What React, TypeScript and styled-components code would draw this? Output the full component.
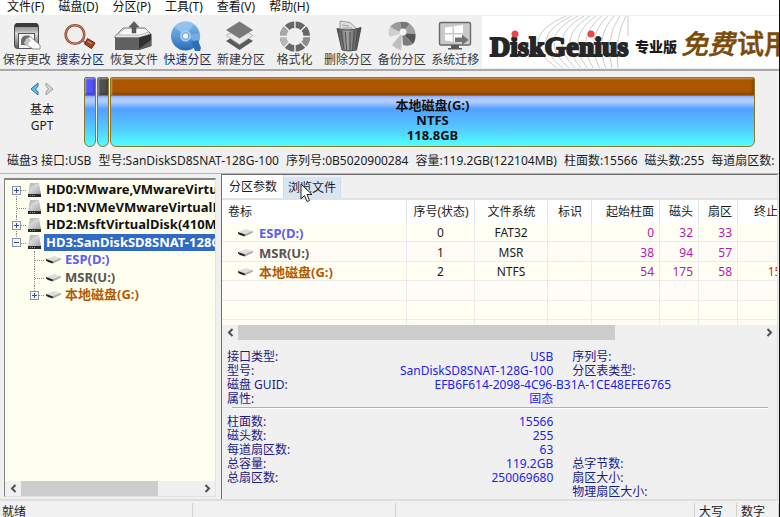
import React from 'react';
import styled, { createGlobalStyle, css } from 'styled-components';

const Global = createGlobalStyle`
  * { box-sizing: border-box; }
  html, body { margin: 0; padding: 0; }
  body, button {
    font-family: "Noto Sans", "Open Sans", "Noto Sans CJK SC", sans-serif;
    font-size: 12px;
    line-height: 14px;
    color: #1c1c1c;
  }
  button { margin: 0; padding: 0; border: 0; background: none; white-space: nowrap; }
  svg { display: block; flex: none; }
`;

const Window = styled.div`
  display: flex;
  flex-direction: column;
  height: 100vh;
  overflow: hidden;
  background: #f0f0f0;
  border-right: 1px solid #111;
`;

/* ---------- menu and toolbar ---------- */
const MenuBar = styled.nav`
  display: flex;
  flex: none;
  gap: 14px;
  height: 15px;
  padding-left: 7px;
  background: #fff;
`;
const MenuItem = styled.button`
  height: 13px;
  line-height: 13px;
  color: #111;
`;
const ToolRow = styled.header`
  display: flex;
  flex: none;
  height: 56px;
  border-bottom: 2px solid #a9a9a9;
`;
const Tools = styled.div`
  display: grid;
  grid-template-columns: repeat(9, 1fr);
  flex: none;
  width: 482px;
  padding-top: 5px;
`;
const Tool = styled.button<{ $accent?: boolean }>`
  display: flex;
  flex-direction: column;
  align-items: center;
  gap: 1px;
  color: ${(p) => (p.$accent ? '#1b2a5c' : '#383838')};
`;
const Banner = styled.div`
  flex: 1;
  min-width: 0;
  margin: 1px 0;
  background: #fff;
  overflow: hidden;
`;

/* ---------- disk map ---------- */
const DiskMap = styled.section`
  display: flex;
  flex: none;
  height: 78px;
  padding: 6px 24px 0 0;
`;
const DiskNav = styled.div`
  display: flex;
  flex-direction: column;
  align-items: center;
  flex: none;
  width: 84px;
  line-height: 16px;
`;
const Arrows = styled.div`
  display: flex;
  gap: 4px;
  padding: 5px 0 6px;
`;
const Parts = styled.div`
  display: flex;
  flex: 1;
  gap: 1px;
  min-width: 0;
`;
const Part = styled.div<{ $color: string; $wide?: boolean }>`
  flex: ${(p) => (p.$wide ? '1' : '0 0 12px')};
  height: 70px;
  border: 1px solid #8c7a2a;
  border-radius: 2px 2px 6px 6px;
  overflow: hidden;
  text-align: center;
  font-size: 13px;
  font-weight: 700;
  line-height: 15px;
  color: #111;
  background: linear-gradient(#7ba0ff 17px, #b5cdff 21px, #b0caff 24px, #52a0ff 31px, #54c8ff 50px, #50ffff 68px);
  &::before {
    content: '';
    display: block;
    height: 17px;
    margin-bottom: 2px;
    background: ${(p) => p.$color};
    border-bottom: 1px solid #8c7a2a;
    box-shadow: inset 1px 1px 2px rgba(255, 255, 255, 0.4), inset -2px -2px 2px rgba(0, 0, 0, 0.2);
  }
`;
const InfoLine = styled.div`
  display: flex;
  flex: none;
  gap: 7px;
  height: 24px;
  padding: 5px 0 0 7px;
  white-space: nowrap;
  overflow: hidden;
`;

/* ---------- body ---------- */
const Body = styled.main`
  display: flex;
  flex: 1;
  min-height: 0;
  border-top: 1px solid #b4b4b4;
`;
const Side = styled.aside`
  display: flex;
  flex-direction: column;
  flex: none;
  width: 212px;
  margin: 4px 5px 2px 4px;
  border: 1px solid #e2e2e2;
  border-top: 2px solid #858585;
  border-left: 1px solid #858585;
  background: #fffff0;
`;
const Tree = styled.ul`
  flex: 1;
  min-height: 0;
  margin: 0;
  padding: 1px 0 0;
  list-style: none;
  overflow: hidden;
`;
const TreeRow = styled.li<{ $child?: boolean }>`
  display: flex;
  align-items: center;
  height: 18px;
  padding-left: ${(p) => (p.$child ? '18px' : '0')};
  font-size: 13px;
  font-weight: 700;
  white-space: nowrap;
  &:nth-child(even) { height: 17px; }
`;
const Guide = styled.span<{ $up?: boolean; $down?: boolean }>`
  position: relative;
  display: flex;
  align-items: center;
  justify-content: center;
  align-self: stretch;
  flex: none;
  width: 22px;
  &::before {
    content: '';
    position: absolute;
    left: 11px;
    top: ${(p) => (p.$up ? '0' : '50%')};
    bottom: ${(p) => (p.$down ? '0' : '50%')};
    border-left: 1px dotted #8a8a8a;
  }
  &::after {
    content: '';
    position: absolute;
    left: 12px;
    right: 1px;
    top: 50%;
    border-top: 1px dotted #8a8a8a;
  }
`;
const Toggle = styled.button`
  position: relative;
  z-index: 1;
  width: 9px;
  height: 9px;
  background: #f4f6fa;
  outline: 1px solid #8c96a8;
  outline-offset: -1px;
`;
const TreeLabel = styled.span<{ $color?: string; $selected?: boolean }>`
  align-self: stretch;
  flex: 1;
  padding-left: 2px;
  margin-left: 2px;
  line-height: 17px;
  overflow: hidden;
  color: ${(p) => (p.$selected ? '#fff' : p.$color || '#111')};
  ${(p) => p.$selected && css`background: #316ac5;`}
`;

const ScrollTrack = styled.div`
  display: flex;
  flex: none;
  height: 15px;
  background: #f0f0f0;
`;
const ScrollButton = styled.button`
  display: flex;
  align-items: center;
  justify-content: center;
  flex: none;
  width: 16px;
`;
const ScrollRun = styled.div`
  flex: 1;
`;
const ScrollThumb = styled.div<{ $size: string }>`
  width: ${(p) => p.$size};
  height: 100%;
  background: #cdcdcd;
`;

const Content = styled.section`
  display: flex;
  flex-direction: column;
  flex: 1;
  min-width: 0;
  margin: 0 1px 0 0;
  border-top: 1px solid #6e6e6e;
  border-left: 1px solid #6e6e6e;
  border-right: 1px solid #dcdcdc;
`;
const Tabs = styled.div`
  display: flex;
  align-items: flex-end;
  flex: none;
  height: 25px;
  border-bottom: 2px solid #e2e2e2;
`;
const Tab = styled.button<{ $active?: boolean }>`
  position: relative;
  height: ${(p) => (p.$active ? '23px' : '21px')};
  padding: ${(p) => (p.$active ? '0 6px 0 7px' : '0 4px')};
  background: ${(p) => (p.$active ? '#fff' : '#d8e6f4')};
  border-right: 1px solid #cbdcec;
`;
const Pointer = styled.svg`
  position: absolute;
  left: 16px;
  top: 6px;
`;
const TableClip = styled.div`
  flex: none;
  height: 125px;
  overflow: hidden;
  background: #fffff2;
`;
const Table = styled.table`
  width: 586px;
  table-layout: fixed;
  border-collapse: separate;
  border-spacing: 0;
  thead tr { height: 23px; }
  tbody tr { height: 19px; }
  tbody tr:nth-child(even) { height: 20px; background: #fffcf6; }
`;
const Col = styled.col<{ $w: number }>`
  width: ${(p) => p.$w}px;
`;
type Align = 'left' | 'center' | 'right';
const Th = styled.th<{ $align: Align }>`
  padding: 0 5px 0 6px;
  font-weight: 400;
  text-align: ${(p) => p.$align};
  white-space: nowrap;
  background: #fff;
  border-right: 1px solid #e4e4e4;
`;
const Td = styled.td<{ $align: Align; $color?: string }>`
  height: inherit;
  padding: 2px 5px 0;
  text-align: ${(p) => p.$align};
  color: ${(p) => p.$color || '#1c1c1c'};
  border-right: 1px solid #ebebef;
  border-bottom: 1px solid #ebebef;
`;
const Volume = styled.span<{ $color: string }>`
  display: flex;
  align-items: center;
  gap: 6px;
  padding-left: 10px;
  font-size: 13px;
  font-weight: 700;
  color: ${(p) => p.$color};
`;

const Details = styled.div`
  flex: 1;
  min-height: 0;
  padding: 10px 9px 0 5px;
`;
const Group = styled.dl`
  margin: 0;
`;
const Rule = styled.hr`
  height: 2px;
  margin: 1px 0 6px 5px;
  border: 0;
  border-top: 1px solid #b0b0b0;
  border-bottom: 1px solid #fff;
`;
const DetailRow = styled.div`
  display: grid;
  grid-template-columns: 5fr 3fr;
  column-gap: 19px;
  height: 14px;
  white-space: nowrap;
`;
const Pair = styled.div<{ $span?: boolean }>`
  display: flex;
  justify-content: space-between;
  ${(p) => p.$span && css`
    grid-column: 1 / 3;
    padding-right: 97px;
  `}
`;
const Term = styled.dt`
  color: #1b1b84;
`;
const Value = styled.dd`
  margin: 0;
  color: #2222f0;
`;

const StatusBar = styled.footer`
  display: flex;
  flex: none;
  height: 18px;
  border-top: 2px solid #dedede;
  background: #f1f1f1;
`;
const StatusCell = styled.div<{ $w?: number }>`
  flex: ${(p) => (p.$w ? `0 0 ${p.$w}px` : '1')};
  margin-top: 2px;
  padding: 2px 0 0 2px;
  border-right: 1px solid #d2d2d2;
  white-space: nowrap;
`;
const StatusKey = styled(StatusCell)`
  padding-left: 4px;
`;

/* ---------- icons ---------- */
const Gradients = () => (
  <svg width="0" height="0" aria-hidden="true">
    <defs>
      <linearGradient id="metal" x1="0" y1="0" x2="0" y2="1">
        <stop offset="0" stopColor="#3c3c3c" />
        <stop offset="0.12" stopColor="#7a7a7a" />
        <stop offset="0.4" stopColor="#d8d8d8" />
        <stop offset="1" stopColor="#5c5c5c" />
      </linearGradient>
      <linearGradient id="blue" x1="0" y1="0" x2="0" y2="1">
        <stop offset="0" stopColor="#7fb6e8" />
        <stop offset="0.5" stopColor="#5a9ada" />
        <stop offset="1" stopColor="#256bb4" />
      </linearGradient>
      <linearGradient id="bin" x1="0" y1="0" x2="1" y2="0">
        <stop offset="0" stopColor="#4a4a4a" />
        <stop offset="0.4" stopColor="#a5a5a5" />
        <stop offset="1" stopColor="#4a4a4a" />
      </linearGradient>
      <linearGradient id="drive" x1="0" y1="0" x2="1" y2="1">
        <stop offset="0" stopColor="#b2b2b2" />
        <stop offset="0.5" stopColor="#d0d0d0" />
        <stop offset="1" stopColor="#a2a2a2" />
      </linearGradient>
    </defs>
  </svg>
);
const Icon = ({ children }: { children: React.ReactNode }) => (
  <svg width="40" height="32" viewBox="0 0 40 32" aria-hidden="true">{children}</svg>
);
const SaveIcon = () => (
  <Icon>
    <rect x="7.5" y="3.5" width="24" height="25" rx="3" fill="url(#metal)" stroke="#4a4a4a" />
    <path d="M8 7V5.500Q8 3 11 3H28Q31 3 31 5.500V7Z" fill="#3a3a3a" />
    <path d="M9.500 7.500H29.500V10H9.500Z" fill="#a8a8a8" />
    <rect x="11.500" y="13.500" width="16" height="15" fill="#f4f4f4" stroke="#555" />
    <path d="M14 20Q15 15.500 19 15.500H23L20 25H14Z" fill="#6c6c6c" />
    <path d="M19 19L23 16.500L33 25V29H26L17 23Z" fill="#fff" stroke="#777" strokeWidth="0.800" />
    <path d="M17 23L21 17.500L24 20L20 26Z" fill="#c4c4c4" />
  </Icon>
);
const SearchIcon = () => (
  <Icon>
    <circle cx="15" cy="14.500" r="9.300" fill="#efefef" stroke="#8f4a32" strokeWidth="2.600" />
    <circle cx="15" cy="14.500" r="9.300" fill="none" stroke="#d3805c" strokeWidth="1" />
    <path d="M21.500 20L25.500 22.500" stroke="#777" strokeWidth="2" />
    <path d="M27.500 18.500L35 23L31.500 28.500L24.500 24Z" fill="#a8401f" stroke="#5f2412" />
    <path d="M27.500 21L32 24" stroke="#d9805f" strokeWidth="1.500" />
  </Icon>
);
const RecoverIcon = () => (
  <Icon>
    <path d="M1 16.500L9 8H31L37 14L25 18H1Z" fill="#e6e6e6" stroke="#555" strokeWidth="0.800" />
    <path d="M5 13L11 8.500H31L35 12L25 15H5Z" fill="#fafafa" stroke="#999" strokeWidth="0.600" />
    <path d="M1 17.500H25V30H1Z" fill="#606060" />
    <path d="M25 17.500L37.500 14V26L25 30Z" fill="#303030" />
    <path d="M25 29L37 20V26L25 30Z" fill="#5f5f5f" />
    <path d="M20 1.500L25 7H22V13H18V7H15Z" fill="#5d5d5d" stroke="#444" strokeWidth="0.500" />
  </Icon>
);
const DiscIcon = () => (
  <Icon>
    <circle cx="18.500" cy="16" r="14.500" fill="url(#blue)" />
    <path d="M18.500 16L7 7A14.500 14.500 0 0 1 27 4Z" fill="#9fcaf0" opacity="0.700" />
    <path d="M18.500 16L33 13A14.500 14.500 0 0 1 31 23Z" fill="#7db3e6" opacity="0.800" />
    <path d="M24 22L31 20L34 28L33 31H28Z" fill="#2d6fb4" />
    <circle cx="18.500" cy="16" r="5.500" fill="#a9cdf0" />
    <circle cx="18.500" cy="16" r="3.300" fill="#f4f8fc" stroke="#5d98d4" />
  </Icon>
);
const LayersIcon = () => (
  <Icon>
    <path d="M5 21L18.500 13L32 21L18.500 30Z" fill="#5b5b5b" />
    <path d="M5 15.500L18.500 8L32 15.500L18.500 24.500Z" fill="#e9e9e9" stroke="#ababab" strokeWidth="0.800" />
    <path d="M5 10L18.500 1.500L32 10L18.500 18.500Z" fill="#797979" />
  </Icon>
);
const FormatIcon = () => (
  <Icon>
    <circle cx="20" cy="16.500" r="11.800" fill="none" stroke="#686868" strokeWidth="6.500" />
    <path d="M8.200 16.500A11.800 11.800 0 0 1 11.700 8.200" fill="none" stroke="#a8a8a8" strokeWidth="6.500" />
    <path d="M11.700 24.800A11.800 11.800 0 0 1 8.200 16.500" fill="none" stroke="#b8b8b8" strokeWidth="6.500" />
    <path d="M28.300 24.800A11.800 11.800 0 0 0 31.800 16.500" fill="none" stroke="#8d8d8d" strokeWidth="6.500" />
    <path d="M20 0V33M3 16.500H37M8 4.500L32 28.500M32 4.500L8 28.500" stroke="#f0f0f0" strokeWidth="1.400" />
    <circle cx="20" cy="16.500" r="8.500" fill="#f0f0f0" />
  </Icon>
);
const TrashIcon = () => (
  <Icon>
    <path d="M12 1L22 2.500L30 10H12Z" fill="#e0e0e0" stroke="#858585" strokeWidth="0.800" />
    <path d="M14 5L21 6M14 8H24" stroke="#9a9a9a" />
    <path d="M9 8.500Q21 12 33 7.500L28.500 30Q21 32 14 30Z" fill="url(#bin)" stroke="#4a4a4a" />
    <path d="M13 11L16 29M17.500 12L18.500 30M22 12V30M26.500 11L24.500 30M30 10L27 29" stroke="#444" strokeWidth="0.900" />
  </Icon>
);
const BackupIcon = () => (
  <Icon>
    <path d="M20 13L9 16A12 12 0 0 1 10 5Z" fill="#b6b6b6" />
    <path d="M20 13L8 7Q13 1.500 18 2Z" fill="#9a9a9a" />
    <path d="M20 13L18 2Q25 1 28 4Z" fill="#777" />
    <path d="M20 13L28 4Q33 8 33.500 14Z" fill="#a0a0a0" />
    <path d="M20 13L33.500 14Q34 20 31 24Z" fill="#555" />
    <path d="M20 13L31 24Q26 27 21 25Z" fill="#7c7c7c" />
    <path d="M20 13L19 30Q14 29 10 25Z" fill="#bdbdbd" stroke="#d6d6d6" />
    <path d="M20 13L8 7Q5 12 8 17Z" fill="#cfcfcf" />
    <circle cx="21" cy="12" r="3.500" fill="#f2f2f2" />
  </Icon>
);
const MigrateIcon = () => (
  <Icon>
    <rect x="4.500" y="2.500" width="31" height="22.500" rx="1.500" fill="#c9c9c9" stroke="#6a6a6a" strokeWidth="1.400" />
    <path d="M16 25H24V28H27V29.500H13V28H16Z" fill="#5a5a5a" />
    <path d="M10 7.500L17.500 6.500V13H10ZM19 6.200L28 5V13H19ZM10 14.500H17.500V21.500L10 20.500ZM19 14.500H28V22.500L19 21.500Z" fill="#fff" />
    <path d="M20 17.500H27V14.500L33.500 20L27 25V22H20Z" fill="#727272" />
  </Icon>
);
const DiskIcon = () => (
  <svg width="15" height="15" viewBox="0 0 15 15" aria-hidden="true">
    <path d="M3 0H12L14 11H1Z" fill="url(#drive)" />
    <path d="M3 8Q5 3 11 1.500" stroke="#e2e2e2" fill="none" />
    <rect x="1" y="11" width="13" height="3" fill="#2a2a2a" />
    <path d="M3 12.500H8" stroke="#999" strokeDasharray="1 1" />
  </svg>
);
const VolumeIcon = () => (
  <svg width="16" height="10" viewBox="0 0 16 10" aria-hidden="true">
    <path d="M1 4L9 1L16 3L8 6.500Z" fill="#dedede" />
    <path d="M7 6.500L16 3V4.500L8 8.500Z" fill="#a8a8a8" />
    <path d="M1 4L7.500 6.300L8 8.500L3 7L1 5.500Z" fill="#222" />
  </svg>
);
const Chevron = ({ right }: { right?: boolean }) => (
  <svg width="7" height="9" viewBox="0 0 7 9" aria-hidden="true">
    <path d={right ? 'M1.500 1L5 4.500L1.500 8' : 'M5.500 1L2 4.500L5.500 8'} fill="none" stroke="#505050" strokeWidth="2" />
  </svg>
);
const PlusMinus = ({ plus }: { plus: boolean }) => (
  <svg width="9" height="9" viewBox="0 0 9 9" aria-hidden="true">
    <path d={plus ? 'M2 4.500H7M4.500 2V7' : 'M2 4.500H7'} stroke="#2f4f9c" />
  </svg>
);

const Scroll = ({ size }: { size: string }) => (
  <ScrollTrack>
    <ScrollButton aria-label="向左滚动"><Chevron /></ScrollButton>
    <ScrollRun><ScrollThumb $size={size} /></ScrollRun>
    <ScrollButton aria-label="向右滚动"><Chevron right /></ScrollButton>
  </ScrollTrack>
);

const LogoBanner = () => (
  <svg width="297" height="53" viewBox="0 0 297 53">
    <g fill="none" stroke="#cccccc" strokeWidth="1">
      {[0, 1, 2, 3, 4, 5, 6, 7, 8, 9, 10].map((i) => (
        <path key={i} d={`M${84 + i * 6} 0Q${32 + i * 10} 22 ${76 + i * 6} 53`} />
      ))}
      <path d="M146 0V20" />
    </g>
    <text x="8" y="40" fontFamily="Liberation Serif, serif" fontWeight="700" fontSize="28" fill="#262626" stroke="#262626" strokeWidth="2">DiskGenius</text>
    <circle cx="33" cy="18" r="3.500" fill="#e8484c" />
    <circle cx="109" cy="18" r="3.500" fill="#e8484c" />
    <text x="153" y="36" fontFamily="Noto Sans CJK SC, sans-serif" fontWeight="900" fontSize="14" fill="#1c1c1c">专业版</text>
    <g fontFamily="Noto Sans CJK SC, sans-serif" fontWeight="500" fontSize="27" fill="#7a4a08" stroke="#7a4a08" strokeWidth="0.500">
      <text x="199" y="38" fontStyle="italic">免费</text>
      <text x="255" y="38">试用</text>
    </g>
  </svg>
);

/* ---------- data ---------- */
const menus = ['文件(F)', '磁盘(D)', '分区(P)', '工具(T)', '查看(V)', '帮助(H)'];
const tools = [
  { label: '保存更改', icon: <SaveIcon /> },
  { label: '搜索分区', icon: <SearchIcon />, accent: true },
  { label: '恢复文件', icon: <RecoverIcon /> },
  { label: '快速分区', icon: <DiscIcon />, accent: true },
  { label: '新建分区', icon: <LayersIcon /> },
  { label: '格式化', icon: <FormatIcon /> },
  { label: '删除分区', icon: <TrashIcon /> },
  { label: '备份分区', icon: <BackupIcon /> },
  { label: '系统迁移', icon: <MigrateIcon /> },
];
const info = [
  '磁盘3 接口:USB', '型号:SanDiskSD8SNAT-128G-100', '序列号:0B5020900284',
  '容量:119.2GB(122104MB)', '柱面数:15566', '磁头数:255', '每道扇区数:',
];
const disks = [
  { name: 'HD0:VMware,VMwareVirtualS', toggle: '+', up: false, down: true },
  { name: 'HD1:NVMeVMwareVirtualN', toggle: '', up: true, down: true },
  { name: 'HD2:MsftVirtualDisk(410MB)', toggle: '+', up: true, down: true },
  { name: 'HD3:SanDiskSD8SNAT-128G', toggle: '-', up: true, down: false, selected: true },
];
const volumes = [
  { name: 'ESP(D:)', color: '#5c5cf5', cells: ['0', 'FAT32', '', '0', '32', '33', ''] },
  { name: 'MSR(U:)', color: '#555555', cells: ['1', 'MSR', '', '38', '94', '57', ''] },
  { name: '本地磁盘(G:)', color: '#b05a05', cells: ['2', 'NTFS', '', '54', '175', '58', '15566'] },
];
const columns: { title: string; w: number; align: Align; color?: string }[] = [
  { title: '卷标', w: 185, align: 'left' },
  { title: '序号(状态)', w: 68, align: 'center' },
  { title: '文件系统', w: 73, align: 'center' },
  { title: '标识', w: 44, align: 'center' },
  { title: '起始柱面', w: 68, align: 'right', color: '#b020b0' },
  { title: '磁头', w: 39, align: 'right', color: '#b020b0' },
  { title: '扇区', w: 39, align: 'right', color: '#b020b0' },
  { title: '终止柱面', w: 70, align: 'right', color: '#c8321e' },
];
const interfaceRows = [
  ['接口类型:', 'USB', '序列号:'],
  ['型号:', 'SanDiskSD8SNAT-128G-100', '分区表类型:'],
  ['磁盘 GUID:', 'EFB6F614-2098-4C96-B31A-1CE48EFE6765', ''],
  ['属性:', '固态', ''],
];
const geometryRows = [
  ['柱面数:', '15566', ''],
  ['磁头数:', '255', ''],
  ['每道扇区数:', '63', ''],
  ['总容量:', '119.2GB', '总字节数:'],
  ['总扇区数:', '250069680', '扇区大小:'],
  ['', '', '物理扇区大小:'],
];

const DetailGroup = ({ rows }: { rows: string[][] }) => (
  <Group>
    {rows.map(([term, value, second], i) => (
      <DetailRow key={i}>
        <Pair $span={value.length > 30}>
          <Term>{term}</Term>
          <Value>{value}</Value>
        </Pair>
        {second && <Term>{second}</Term>}
      </DetailRow>
    ))}
  </Group>
);

export default function App() {
  return (
    <Window>
      <Global />
      <MenuBar>
        {menus.map((m) => <MenuItem key={m}>{m}</MenuItem>)}
      </MenuBar>
      <ToolRow>
        <Tools>
          {tools.map((t) => (
            <Tool key={t.label} $accent={t.accent}>{t.icon}{t.label}</Tool>
          ))}
        </Tools>
        <Banner><LogoBanner /></Banner>
      </ToolRow>
      <DiskMap>
        <DiskNav>
          <Arrows>
            <button aria-label="上一个磁盘">
              <svg width="10" height="14" viewBox="0 0 10 14"><path d="M8 1L1 7L8 13V10L5.500 7L8 4Z" fill="#58c4f2" stroke="#2b6ea8" /></svg>
            </button>
            <button aria-label="下一个磁盘">
              <svg width="10" height="14" viewBox="0 0 10 14"><path d="M2 1L9 7L2 13V10L4.500 7L2 4Z" fill="#d8d8d8" stroke="#9c9c9c" /></svg>
            </button>
          </Arrows>
          <span>基本</span>
          <span>GPT</span>
        </DiskNav>
        <Parts>
          <Part $color="#5555fa" />
          <Part $color="#505050" />
          <Part $color="#aa5500" $wide>
            <div>本地磁盘(G:)</div>
            <div>NTFS</div>
            <div>118.8GB</div>
          </Part>
        </Parts>
      </DiskMap>
      <InfoLine>
        {info.map((t) => <span key={t}>{t}</span>)}
      </InfoLine>
      <Body>
        <Side>
          <Tree>
            {disks.map((d) => (
              <TreeRow key={d.name}>
                <Guide $up={d.up} $down={d.down}>
                  {d.toggle && <Toggle aria-label={d.name}><PlusMinus plus={d.toggle === '+'} /></Toggle>}
                </Guide>
                <DiskIcon />
                <TreeLabel $selected={d.selected}>{d.name}</TreeLabel>
              </TreeRow>
            ))}
            {volumes.map((v, i) => (
              <TreeRow key={v.name} $child>
                <Guide $up $down={i < 2}>
                  {i === 2 && <Toggle aria-label={v.name}><PlusMinus plus /></Toggle>}
                </Guide>
                <VolumeIcon />
                <TreeLabel $color={v.color}>{v.name}</TreeLabel>
              </TreeRow>
            ))}
          </Tree>
          <Scroll size="77%" />
        </Side>
        <Content>
          <Tabs>
            <Tab $active>分区参数</Tab>
            <Tab>
              浏览文件
              <Pointer width="13" height="20" viewBox="0 0 13 20" aria-hidden="true">
                <path d="M1 1V16L4.500 12.500L7 18.500L9.500 17.500L7 11.500H12Z" fill="#fff" stroke="#222" />
              </Pointer>
            </Tab>
          </Tabs>
          <TableClip>
            <Table>
              <colgroup>{columns.map((c) => <Col key={c.title} $w={c.w} />)}</colgroup>
              <thead>
                <tr>{columns.map((c) => <Th key={c.title} $align={c.align}>{c.title}</Th>)}</tr>
              </thead>
              <tbody>
                {volumes.map((v) => (
                  <tr key={v.name}>
                    <Td $align="left"><Volume $color={v.color}><VolumeIcon />{v.name}</Volume></Td>
                    {v.cells.map((c, i) => (
                      <Td key={i} $align={columns[i + 1].align} $color={columns[i + 1].color}>{c}</Td>
                    ))}
                  </tr>
                ))}
                {[0, 1, 2].map((r) => (
                  <tr key={r}>{columns.map((c) => <Td key={c.title} $align="left" />)}</tr>
                ))}
              </tbody>
            </Table>
          </TableClip>
          <Scroll size="72%" />
          <Details>
            <DetailGroup rows={interfaceRows} />
            <Rule />
            <DetailGroup rows={geometryRows} />
          </Details>
        </Content>
      </Body>
      <StatusBar>
        <StatusCell $w={193}>就绪</StatusCell>
        <StatusCell $w={203} />
        <StatusCell />
        <StatusKey $w={42}>大写</StatusKey>
        <StatusKey $w={42}>数字</StatusKey>
      </StatusBar>
      <Gradients />
    </Window>
  );
}
